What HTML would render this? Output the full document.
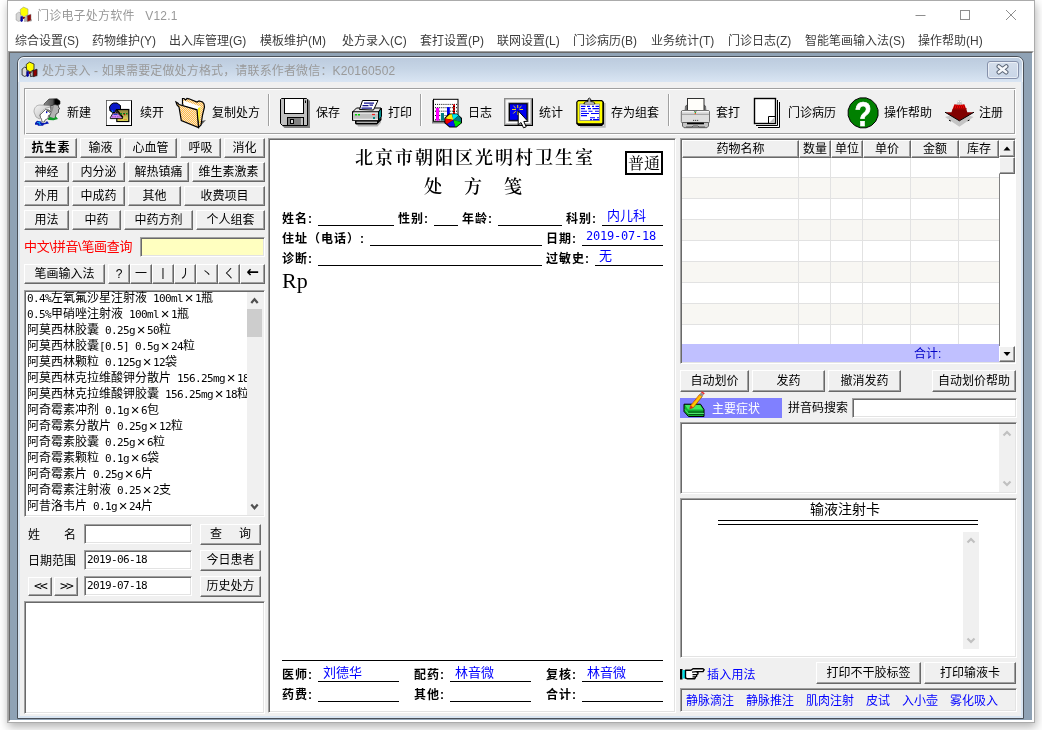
<!DOCTYPE html>
<html lang="zh-CN">
<head>
<meta charset="utf-8">
<title>门诊电子处方软件 V12.1</title>
<style>
*{box-sizing:border-box;margin:0;padding:0}
html,body{width:1042px;height:730px;overflow:hidden;background:#fff}
body{position:relative;will-change:transform;font-family:"Liberation Sans","Noto Sans CJK SC",sans-serif;font-size:12px;color:#000}
.a{position:absolute}
.ui{font-family:"Liberation Sans","Noto Sans CJK SC",sans-serif;font-size:12px;line-height:16px;white-space:nowrap}
.song{font-family:"Liberation Serif","Noto Serif CJK SC",serif}
.m{font-family:"DejaVu Sans Mono","Liberation Mono",monospace;font-size:11px;letter-spacing:-.62px}
.m13{font-family:"DejaVu Sans Mono","Liberation Mono",monospace;font-size:12px;letter-spacing:-.22px}
.x{display:inline-block;width:12px;height:16px;line-height:16px;font-size:15px;font-weight:300;vertical-align:top;text-align:center}
/* window */
#shadow{left:7px;top:0;width:1028px;height:723px;box-shadow:1px 4px 9px rgba(0,0,0,.3);background:#fff}
#win{left:7px;top:0;width:1028px;height:723px;background:#fff;border:1px solid #ababab}
#title{left:37px;top:8px;color:#999;font-size:12px;line-height:16px;white-space:pre;letter-spacing:.2px}
.menu{top:33px;color:#3c3c3c;font-size:12px;line-height:16px;white-space:nowrap}
/* mdi */
#druglist div{height:16px;overflow:hidden}
#mdi{left:8px;top:51px;width:1026px;height:671px;background:#8fa2b5;border:1px solid;border-color:#a0a0a0 #fff #fff #a0a0a0;overflow:hidden}
#mdi2{left:0;top:0;right:0;bottom:0;border:1px solid;border-color:#696969 #fff #fff #696969}
/* child window */
#child{left:17px;top:56px;width:1007px;height:663px;border:1px solid #4a5058;border-radius:7px 7px 0 0;background:#d9e5f2;overflow:hidden}
#ctitle{left:0;top:0;width:1005px;height:25px;background:linear-gradient(#bccbde 0,#c6d5e6 45%,#d9e5f3 100%);border-top:1px solid #f4f8fc;border-left:1px solid #f4f8fc;border-right:1px solid #f4f8fc;border-radius:6px 6px 0 0}
#cclient{left:2px;top:25px;width:1001px;height:634px;background:#f0f0f0}
#ctext{left:42px;top:63px;color:#9a9a9a;font-size:12px;line-height:16px;white-space:nowrap;letter-spacing:.15px}
#cclose{left:987px;top:61px;width:32px;height:18px;border:1px solid #8691ab;border-radius:3px;background:linear-gradient(#d4deeb,#c9d6e7);box-shadow:inset 0 0 0 1px rgba(255,255,255,.55)}
/* classic controls */
.btn{position:absolute;background:#f0f0f0;border:1px solid;border-color:#fff #696969 #696969 #fff;box-shadow:inset -1px -1px 0 #a0a0a0,inset 1px 1px 0 #f0f0f0;text-align:center;font-size:12px;line-height:19px;white-space:nowrap;overflow:hidden}
.sunk{position:absolute;background:#fff;border:1px solid;border-color:#a0a0a0 #fff #fff #a0a0a0;box-shadow:inset 1px 1px 0 #696969,inset -1px -1px 0 #e3e3e3}
.tb{top:105px;font-size:12px;line-height:16px;white-space:nowrap}
.sep{top:94px;width:2px;height:32px;border-left:1px solid #a0a0a0;border-right:1px solid #fff}
.lb{font-family:"Liberation Sans","Noto Sans CJK SC",sans-serif;font-weight:bold;font-size:12px;letter-spacing:1px;line-height:16px;white-space:nowrap}
.ul{height:1px;background:#000}
.bl{font-family:"Liberation Sans","Noto Sans CJK SC",sans-serif;font-size:13px;line-height:16px;color:#0000ff;white-space:nowrap}
.vl{top:17px;width:1px;height:187px;background:#e2e2e2}
.hd{top:0;height:18px;background:#f0f0f0;border:1px solid;border-color:#fff #696969 #696969 #fff;box-shadow:inset -1px -1px 0 #a0a0a0;text-align:center;font-size:12px;line-height:17px;white-space:nowrap;overflow:hidden}
.sbb{width:16px;background:#f0f0f0;border:1px solid;border-color:#fff #696969 #696969 #fff;box-shadow:inset -1px -1px 0 #a0a0a0}
</style>
</head>
<body>
<div class="a" id="shadow"></div>
<div class="a" id="win"></div>

<!-- main title bar -->
<svg class="a" style="left:15px;top:6px" width="18" height="18" viewBox="0 0 18 18">
  <path d="M1.100 8 L3.500 6.200 L6 7 L6 14.500 L3.500 15.400 L1.100 14Z" fill="#d6d6d6" stroke="#8a8a8a" stroke-width=".5"/>
  <path d="M9.200 12.500 L12.300 9 L12.500 15 L9.500 15.600Z" fill="#b4b4b4" stroke="#8a8a8a" stroke-width=".5"/>
  <path d="M12.100 9.500 L16 8.200 L16 14.500 L12.300 15.700Z" fill="#900000" stroke="#8a8a8a" stroke-width=".5"/>
  <path d="M5.600 10.500 L7.900 10.100 L7.900 15 L6.500 16 L5.400 15Z" fill="#0000a0"/>
  <path d="M7.900 11.100 L10.200 11.100 L9 13 L7.900 12.800Z" fill="#800000"/>
  <path d="M8.500 1.100 L5.200 3.500 L5.500 8.500 L9 11 L13 8.500 L13 3Z" fill="#ffff00" stroke="#8a8a8a" stroke-width=".5"/>
  <path d="M16.200 13 L17 13.500 L17 15 L13 16.300 L16.200 14.800Z" fill="#a0a0a0"/>
</svg>
<div class="a" id="title">门诊电子处方软件   V12.1</div>
<svg class="a" style="left:910px;top:5px" width="115" height="22" viewBox="0 0 115 22">
  <path d="M5.5 10.5H15.5" stroke="#8e8e8e" stroke-width="1" fill="none"/>
  <rect x="50.5" y="5.5" width="9" height="9" stroke="#8e8e8e" stroke-width="1" fill="none"/>
  <path d="M96 5L106 15M106 5L96 15" stroke="#8e8e8e" stroke-width="1" fill="none"/>
</svg>

<!-- menu bar -->
<div class="a menu" style="left:15px">综合设置(S)</div>
<div class="a menu" style="left:92px">药物维护(Y)</div>
<div class="a menu" style="left:169px">出入库管理(G)</div>
<div class="a menu" style="left:260px">模板维护(M)</div>
<div class="a menu" style="left:342px">处方录入(C)</div>
<div class="a menu" style="left:420px">套打设置(P)</div>
<div class="a menu" style="left:497px">联网设置(L)</div>
<div class="a menu" style="left:573px">门诊病历(B)</div>
<div class="a menu" style="left:651px">业务统计(T)</div>
<div class="a menu" style="left:728px">门诊日志(Z)</div>
<div class="a menu" style="left:805px">智能笔画输入法(S)</div>
<div class="a menu" style="left:918px">操作帮助(H)</div>

<!-- MDI client -->
<div class="a" id="mdi"><div class="a" id="mdi2"></div></div>

<!-- child window -->
<div class="a" id="child">
  <div class="a" id="ctitle"></div>
  <div class="a" id="cclient"></div>
</div>
<svg class="a" style="left:21px;top:61px" width="18" height="18" viewBox="0 0 18 18">
  <path d="M1.100 8 L3.500 6.200 L6 7 L6 14.500 L3.500 15.400 L1.100 14Z" fill="#d6d6d6" stroke="#1a1a1a" stroke-width=".8"/>
  <path d="M9.200 12.500 L12.300 9 L12.500 15 L9.500 15.600Z" fill="#b4b4b4" stroke="#1a1a1a" stroke-width=".8"/>
  <path d="M12.100 9.500 L16 8.200 L16 14.500 L12.300 15.700Z" fill="#900000" stroke="#1a1a1a" stroke-width=".8"/>
  <path d="M5.600 10.500 L7.900 10.100 L7.900 15 L6.500 16 L5.400 15Z" fill="#0000a0"/>
  <path d="M7.900 11.100 L10.200 11.100 L9 13 L7.900 12.800Z" fill="#800000"/>
  <path d="M8.500 1.100 L5.200 3.500 L5.500 8.500 L9 11 L13 8.500 L13 3Z" fill="#ffff00" stroke="#1a1a1a" stroke-width=".8"/>
  <path d="M16.200 13 L17 13.500 L17 15 L13 16.300 L16.200 14.800Z" fill="#a0a0a0"/>
</svg>
<div class="a" id="ctext">处方录入 - 如果需要定做处方格式，请联系作者微信：K20160502</div>
<div class="a" id="cclose"></div>
<svg class="a" style="left:996px;top:64px" width="13" height="11" viewBox="0 0 13 11">
  <path d="M2.800 2.500L10.200 8.200M10.200 2.500L2.800 8.200" stroke="#5c6676" stroke-width="4.600" stroke-linecap="round" fill="none"/>
  <path d="M2.800 2.500L10.200 8.200M10.200 2.500L2.800 8.200" stroke="#f6f8fb" stroke-width="2.600" stroke-linecap="round" fill="none"/>
</svg>

<!-- toolbar frame -->
<div class="a" style="left:24px;top:88px;width:992px;height:47px;border:1px solid;border-color:#a0a0a0 #fff #fff #a0a0a0;box-shadow:inset 1px 1px 0 #fff,inset -1px -1px 0 #a0a0a0"></div>
<div class="a sep" style="left:268px"></div>
<div class="a sep" style="left:420px"></div>
<div class="a sep" style="left:668px"></div>

<!-- 新建 -->
<svg class="a" style="left:30px;top:95px" width="36" height="36" viewBox="0 0 36 36">
  <defs>
    <linearGradient id="g1" x1="0" x2="1"><stop offset="0" stop-color="#8a8a8a"/><stop offset=".55" stop-color="#555"/><stop offset=".7" stop-color="#000"/></linearGradient>
    <linearGradient id="g2" x1="0" x2="1" y1="0" y2="1"><stop offset="0" stop-color="#f4f4f4"/><stop offset=".6" stop-color="#d0d0d0"/><stop offset="1" stop-color="#9a9a9a"/></linearGradient>
  </defs>
  <path d="M14 9 L19 4 L27 3.700 L30 6 L30 9 L27 10.500 L22 11 L20 10.500 L14 10.500Z" fill="url(#g1)" stroke="#222" stroke-width=".6"/>
  <path d="M20.500 11 L25 9.500 L28.500 10.500 L28.500 12.500 L30 13.500 L28.500 14.500 L28.500 17.500 L26 19 L25 24 L19 24.500 L20 19 L21 16Z" fill="#b4b4b4" stroke="#222" stroke-width=".7"/>
  <path d="M21 12 L24 11 L22.500 16 L20.500 18.500Z" fill="#8c8c8c"/>
  <path d="M17.700 23.500 L20 22 L24.500 23.300 L25.500 21 L28 24 L23.500 25.200 L18.500 25Z" fill="#109a28"/>
  <path d="M4 17 C4 12 7 10 10 10 L19.500 10.500 L20.500 12 L15 13.500 L11 17.500 L9.500 20 L11 22.500 L9.500 24 L6 22Z" fill="url(#g2)" stroke="#777" stroke-width=".5"/>
  <path d="M10 20 L15.500 14.500 L19 15 L21 17 L20.500 19.500 L18.500 20.500 L18 23.500 L15 25 L14.500 27 L12 27 L11.500 24 L10.500 22.500Z" fill="#fff" stroke="#333" stroke-width=".7"/>
  <path d="M16 16.500 L18 15.700 L20 17.500" fill="none" stroke="#000" stroke-width=".9"/>
  <rect x="16" y="16.800" width="1.300" height="1.300" fill="#0000f0"/>
  <path d="M5 28 L7 25.800 L11 26.500 L12 28 L15 28 L17 26 L19 28.500 L14 29.500 L13 30.800 L8 30.800 L7.500 29.800 L5 29.800Z" fill="#0a1ab0"/>
  <path d="M7 27.500 L10 27.200 L9 29 L11 29.500" fill="none" stroke="#10a0f0" stroke-width="1"/>
</svg>
<div class="a tb" style="left:67px">新建</div>

<!-- 续开 -->
<svg class="a" style="left:102px;top:95px" width="36" height="36" viewBox="0 0 36 36">
  <defs><linearGradient id="g3" x1="0" x2="0" y1="0" y2="1"><stop offset="0" stop-color="#8c8438"/><stop offset=".5" stop-color="#b8ac50"/><stop offset="1" stop-color="#f4f060"/></linearGradient></defs>
  <rect x="4.500" y="5.500" width="25" height="25" fill="#fff" stroke="#000" stroke-width="1"/>
  <path d="M4.500 30 V5.500 H29.500" fill="none" stroke="#707070" stroke-width="1"/>
  <rect x="14.800" y="14.500" width="12" height="12" fill="url(#g3)" stroke="#000" stroke-width="1.200"/>
  <path d="M8 16 L7.500 12 L9 9.500 L11.500 8 L15 8 L17 9.500 L18.500 10.500 L18.500 14.500 L14 14.500 L13 17.500 L10 17.500 L9 16Z" fill="#0a18c8" stroke="#000" stroke-width="1"/>
  <path d="M9.500 15.500 L11 18 L11 15.500Z" fill="#1090f0"/>
  <path d="M11 18 L15.500 18 L20.500 22.700 L20.500 23.600 L8.300 23.600 L8.300 22.700Z" fill="#d090f0" stroke="#000" stroke-width=".9"/>
  <path d="M11.500 19.500h4" stroke="#2840d0" stroke-width="1"/>
  <path d="M10 21.800h8.500" stroke="#a040c0" stroke-width="1" stroke-dasharray="1.500 1"/>
  <path d="M14.500 14.500 L21 22.500" stroke="#000" stroke-width="1.200"/>
  <path d="M18 18.700h2M21 18.700h2M24 18.700h1.500" stroke="#0a7a20" stroke-width="1.600"/>
  <rect x="22" y="19" width="1.200" height="1.200" fill="#e00000"/>
  <path d="M16.500 24.300h3M21.500 24.300h3.500" stroke="#e09030" stroke-width="1"/>
</svg>
<div class="a tb" style="left:140px">续开</div>

<!-- 复制处方 -->
<svg class="a" style="left:173px;top:95px" width="36" height="36" viewBox="0 0 36 36">
  <defs><pattern id="ht" width="2" height="2" patternUnits="userSpaceOnUse"><rect width="2" height="2" fill="#ffc040"/><rect width="1" height="1" fill="#f8e0d0"/><rect x="1" y="1" width="1" height="1" fill="#f8e0d0"/></pattern></defs>
  <path d="M26 32.500 L33 25 L29 26 L27 30Z" fill="#555"/>
  <path d="M9.500 9 L9.500 3.500 L11 3.500 L12.500 5 L14 3.500 L16 3.800 L24 7 L26 6 L29.500 7 L31 9 L31.500 12 L29.500 20 L28 30 L25.500 32.500 L24 15Z" fill="url(#ht)" stroke="#000" stroke-width="1.200" stroke-linejoin="miter"/>
  <path d="M10.500 5.500 L27.500 11.500 L26.500 27 L24 15 L10.500 10.500Z" fill="#fff"/>
  <path d="M25 13 L27.500 12 L26.500 28 L25.200 24Z" fill="#f8f020"/>
  <path d="M3 7 L5 8.200 L6 9.500 L24 14.800 L25.500 32.500 L8.300 25.500 L6 12 L4 10Z" fill="url(#ht)" stroke="#000" stroke-width="1.200" stroke-linejoin="miter"/>
</svg>
<div class="a tb" style="left:212px">复制处方</div>

<!-- 保存 -->
<svg class="a" style="left:276px;top:94px" width="36" height="36" viewBox="0 0 36 36">
  <path d="M6.500 32 L8.500 34 L34 34 L34 7 L32 5 L32 32Z" fill="#808080"/>
  <path d="M5.500 4.500 L30.500 4.500 L31.500 5.500 L31.500 31.500 L6.500 31.500 L4.500 29.500 L4.500 5.500Z" fill="#c0c0c0" stroke="#000" stroke-width="1"/>
  <rect x="8.500" y="4.500" width="19" height="15" fill="#fff" stroke="#000" stroke-width="1"/>
  <rect x="11.500" y="23.500" width="16" height="8" fill="#808080" stroke="#000" stroke-width="1"/>
  <rect x="25" y="24" width="2" height="7" fill="#c0c0c0"/>
  <rect x="14.500" y="25.500" width="3" height="4" fill="#d8d8d8" stroke="#000" stroke-width="1"/>
  <rect x="29" y="6.500" width="1" height="2.500" fill="#000"/>
</svg>
<div class="a tb" style="left:316px">保存</div>

<!-- 打印 -->
<svg class="a" style="left:348px;top:94px" width="36" height="36" viewBox="0 0 36 36">
  <path d="M9 30.500 L29 30.500 L33 26.500 L33 28.500 L29.500 32.500 L10 32.500Z" fill="#b0b0b0"/>
  <path d="M7 26.500 L30.500 26.500 L33.500 23 L33.500 26 L29 30.500 L8 30.500 L7 29.500Z" fill="#000"/>
  <path d="M8.500 28.200 L29 28.200" stroke="#fff" stroke-width="1"/>
  <path d="M4.500 18 L8.500 14 L33 14 L30.500 18Z" fill="#e4e4e4" stroke="#000" stroke-width="1"/>
  <path d="M30.500 18 L33.500 14.200 L33.500 22.500 L30.500 26.300Z" fill="#008888" stroke="#000" stroke-width="1"/>
  <rect x="4.500" y="18" width="26" height="8.300" fill="#c0c0c0" stroke="#000" stroke-width="1"/>
  <path d="M5.500 19 H30" stroke="#fff" stroke-width="1"/>
  <path d="M5.500 25.300 H30" stroke="#fff" stroke-width="1"/>
  <path d="M11.500 15.500 L14.500 6.500 L30 6.500 L25.500 16Z" fill="#fff" stroke="#000" stroke-width="1"/>
  <path d="M16 9.200h10M14.500 11.700h6M21.500 11.200h3.500M13.500 14.200h10.500" stroke="#10108c" stroke-width="1.200"/>
  <path d="M7 20.700h2M10 20.700h2" stroke="#00d000" stroke-width="1.600"/>
  <path d="M24 20.500h3" stroke="#f02020" stroke-width="1.200"/>
  <rect x="25" y="23" width="2" height="2" fill="#008888"/>
</svg>
<div class="a tb" style="left:388px">打印</div>

<!-- 日志 -->
<svg class="a" style="left:426px;top:94px" width="38" height="36" viewBox="0 0 38 36">
  <path d="M6 6 L6 29.500 L20 29.500 L20 27.500 L7 27.500 L7 6Z" fill="#808080"/>
  <rect x="7.500" y="5.300" width="24.500" height="22" fill="#fff" stroke="#000" stroke-width="1"/>
  <path d="M9 10.400h22M9 13.700h22M9 17.200h22M9 21.500h22M9 25.800h22" stroke="#000" stroke-width="1" stroke-dasharray="1 1.100"/>
  <rect x="10" y="13.800" width="3.100" height="12.800" fill="#ff00ff"/>
  <rect x="14.900" y="19" width="3.100" height="7.600" fill="#008080"/>
  <rect x="21" y="13.100" width="2.800" height="9" fill="#0000f0"/>
  <rect x="27" y="10.400" width="2" height="9.500" fill="#f00000"/>
  <path d="M27 12.500h2M27 15h2M27 17.500h2" stroke="#000" stroke-width=".8"/>
  <path d="M18.300 24 L23 19.600 L31 19.400 L36 24 L36 29 L30.500 33.500 L23.500 33.500 L18.300 29Z" fill="#000"/>
  <path d="M27.300 26 L19.300 24.500 L23.500 20.500 L26 20.300Z" fill="#ffee00"/>
  <path d="M27.300 26 L26 20.300 L31 20.300 L32.500 21.500Z" fill="#00e8f0"/>
  <path d="M27.300 26 L32.500 21.500 L35 24.500 L35 28Z" fill="#007c80"/>
  <path d="M27.300 26 L35 28 L34.500 29.300 L30.500 32.500 L29 32.500Z" fill="#00e000"/>
  <path d="M27.300 26 L29 32.500 L23.800 32.500 L21 30Z" fill="#1010f0"/>
  <path d="M27.300 26 L21 30 L19.300 28.500 L19.300 24.500Z" fill="#f00000"/>
</svg>
<div class="a tb" style="left:468px">日志</div>

<!-- 统计 -->
<svg class="a" style="left:498px;top:94px" width="38" height="36" viewBox="0 0 38 36">
  <rect x="6" y="4" width="29" height="28" fill="#8c8c8c"/>
  <path d="M6 32 H35 V4 L34 5 V31 H7Z" fill="#000"/>
  <rect x="7.500" y="5.500" width="25.500" height="24.500" fill="#fff"/>
  <path d="M7.500 5.500 H33 L30.500 8 H10 V27.500 L7.500 30Z" fill="#c8c8c8"/>
  <path d="M33 5.500 V30 H7.500 L10 27.500 H30.500 V8Z" fill="#b0b0b0"/>
  <rect x="9" y="7" width="22.500" height="21.500" fill="none" stroke="#fff" stroke-width="1.600"/>
  <rect x="10.300" y="8.500" width="20" height="19" fill="#606060"/>
  <rect x="11.500" y="9.800" width="17.500" height="16.500" fill="#0000f0" stroke="#000" stroke-width="1"/>
  <path d="M19.700 11v3M19.700 17.500v3.500M14 15.500h4M21.500 15.500h3.500M15.500 12l2.300 2.200M23.500 12l-2.200 2.200M15.300 19.500l2.400-2.400" stroke="#ffee00" stroke-width=".9"/>
  <path d="M20.200 16.800 L20.200 31 L23 28.500 L25.500 33.800 L28.200 32.800 L25.800 27.500 L29.800 27.300Z" fill="#fff" stroke="#000" stroke-width="1"/>
</svg>
<div class="a tb" style="left:539px">统计</div>

<!-- 存为组套 -->
<svg class="a" style="left:570px;top:94px" width="38" height="36" viewBox="0 0 38 36">
  <path d="M10 32 L10 33.700 L35.700 33.700 L35.700 9 L34 9 L34 32Z" fill="#b8b8b8"/>
  <path d="M8 6 H32 L34 8 V30 L32 32 H8.500 L6.200 29.800 V8Z" fill="#000"/>
  <path d="M8.500 7.200 H31.500 L32.300 8 V28.500 L31.500 29.300 H8.500 L7.500 28.500 V8Z" fill="#ffff00"/>
  <rect x="9.800" y="10" width="19.600" height="16.600" fill="#fff" stroke="#808080" stroke-width=".8"/>
  <path d="M11 12.400h4.500M17 12.400h3M22 12.400h2M25.500 12.400h3.500M11 14.600h4M18 14.600h3M22.500 14.600h6.500M11 17.300h6M18.500 17.300h4M25 17.300h4M11 19.500h8M21 19.500h8M11 21.600h6M20 23.700h5M27 23.700h2M20 25.600h2M23 25.600h6" stroke="#0000ff" stroke-width="1.100"/>
  <path d="M13.800 9.800 L15 8 L18 7.500 L18 5 L19.300 4 L20.700 5 L20.700 7.500 L23.800 8 L25 9.800Z" fill="#b0b0b0" stroke="#000" stroke-width=".8"/>
  <path d="M15 9.300h9" stroke="#e8e8e8" stroke-width=".8"/>
</svg>
<div class="a tb" style="left:611px">存为组套</div>

<!-- 套打 -->
<svg class="a" style="left:676px;top:94px" width="38" height="36" viewBox="0 0 38 36">
  <path d="M9 16.500 L9.500 12 L11 11 L11 16.500Z M28 16.500 L28 11 L29.500 12 L30 16.500Z" fill="#8a8a8a" stroke="#444" stroke-width=".6"/>
  <rect x="11.500" y="4.500" width="16.500" height="12.500" fill="#fffefa" stroke="#303030" stroke-width="1"/>
  <rect x="5.300" y="16.500" width="28.200" height="12.500" rx="1.500" fill="#dedede" stroke="#707070" stroke-width="1"/>
  <path d="M6 17.500h27" stroke="#f4f4f4" stroke-width="1"/>
  <path d="M6 20.300h27" stroke="#9a9a9a" stroke-width="1"/>
  <path d="M6.500 28.500 H32.500 L32.500 32 L31 33.700 H8 L6.500 32Z" fill="#c4c4c4" stroke="#606060" stroke-width="1"/>
  <path d="M11 29.500h17" stroke="#000" stroke-width="1.600"/>
  <path d="M10 33h6l1-1h5l1 1h6" stroke="#555" stroke-width="1" fill="none"/>
  <path d="M17 26.400h1.200M19 26.400h1.200M21 26.400h1.200" stroke="#444" stroke-width="1"/>
  <path d="M17.500 16.500 L19.300 18 L21 16.500" stroke="#555" stroke-width=".8" fill="none"/>
  <rect x="18.700" y="17.700" width="1.200" height="1.200" fill="#00b020"/>
  <rect x="18.700" y="19" width="1.200" height="1.200" fill="#ff5010"/>
</svg>
<div class="a tb" style="left:716px">套打</div>

<!-- 门诊病历 -->
<svg class="a" style="left:753px;top:97px" width="29" height="33" viewBox="0 0 29 33">
  <path d="M5 30.500 L26.500 30.500 L26.500 5" fill="none" stroke="#000" stroke-width="1"/>
  <path d="M3 28.500 L24.500 28.500 L24.500 3" fill="none" stroke="#000" stroke-width="1"/>
  <path d="M4 29.500 L25.500 29.500 L25.500 4M2 27.500H23.500V2" fill="none" stroke="#fff" stroke-width="1"/>
  <rect x="1.500" y="1.500" width="21" height="25" fill="#fff" stroke="#000" stroke-width="1.400"/>
  <path d="M15.500 26.500 V19.500 H22.500" fill="none" stroke="#000" stroke-width="1"/>
  <path d="M16.500 25.500 L21.500 20.500 L21.500 25.500Z" fill="#c0c0c0"/>
</svg>
<div class="a tb" style="left:788px">门诊病历</div>

<!-- 操作帮助 -->
<svg class="a" style="left:842px;top:94px" width="40" height="36" viewBox="0 0 40 36">
  <path d="M36.0 21.8 L33.7 27.3 L29.5 31.5 L24.1 33.8 L18.1 33.8 L12.7 31.5 L8.5 27.3 L6.2 21.8 L6.2 15.9 L8.5 10.4 L12.7 6.2 L18.1 3.9 L24.1 3.9 L29.5 6.2 L33.7 10.4 L36.0 15.9Z" fill="#008000" stroke="#000" stroke-width="1"/>
  <text transform="translate(21.100 31.900) scale(.78 1)" text-anchor="middle" font-family="Liberation Sans,sans-serif" font-weight="bold" font-size="36" fill="#fff" stroke="#fff" stroke-width=".7">?</text>
</svg>
<div class="a tb" style="left:884px">操作帮助</div>

<!-- 注册 -->
<svg class="a" style="left:938px;top:94px" width="40" height="36" viewBox="0 0 40 36">
  <path d="M7 23 L14 21 L21.400 27 L29 21 L35.500 23 L21.400 32.800Z" fill="#c4c4c4"/>
  <path d="M11 26.200l1.800 .8M31.500 26l-1.800 .8" stroke="#000" stroke-width="1"/>
  <path d="M7 18.200 L13.500 18.200 L14.500 15 L28.300 15 L29.300 18.200 L36 18.200 L21.400 26.800Z" fill="#800000"/>
  <path d="M7 18.200 L21.400 26.800 L36 18.200" fill="none" stroke="#000" stroke-width="1"/>
  <path d="M14.500 15.200 L16.300 10.500 L26.500 10.500 L28.300 15.200Z" fill="#f00000"/>
  <path d="M16 13h12M15.500 14.600h13" stroke="#600000" stroke-width="1" stroke-dasharray="1 1"/>
  <path d="M16.500 11h10" stroke="#600000" stroke-width=".8" stroke-dasharray="1 1.200"/>
  <path d="M18.500 10.500 L20 6.500 L23 6.500 L24.500 10.500Z" fill="#c8c8c8"/>
  <path d="M20 7.500h1M22 7.500h1" stroke="#fff" stroke-width="1.200"/>
</svg>
<div class="a tb" style="left:979px">注册</div>

<!-- category buttons -->
<div class="btn" style="left:24px;top:138px;width:53px;height:20px;font-weight:bold;letter-spacing:1px;text-indent:1px">抗生素</div>
<div class="btn" style="left:80px;top:138px;width:41px;height:20px">输液</div>
<div class="btn" style="left:124px;top:138px;width:53px;height:20px">心血管</div>
<div class="btn" style="left:180px;top:138px;width:41px;height:20px">呼吸</div>
<div class="btn" style="left:224px;top:138px;width:41px;height:20px">消化</div>

<div class="btn" style="left:24px;top:162px;width:45px;height:20px">神经</div>
<div class="btn" style="left:72px;top:162px;width:53px;height:20px">内分泌</div>
<div class="btn" style="left:128px;top:162px;width:61px;height:20px">解热镇痛</div>
<div class="btn" style="left:192px;top:162px;width:73px;height:20px">维生素激素</div>

<div class="btn" style="left:24px;top:186px;width:45px;height:20px">外用</div>
<div class="btn" style="left:72px;top:186px;width:53px;height:20px">中成药</div>
<div class="btn" style="left:128px;top:186px;width:53px;height:20px">其他</div>
<div class="btn" style="left:184px;top:186px;width:81px;height:20px">收费项目</div>

<div class="btn" style="left:24px;top:210px;width:45px;height:20px">用法</div>
<div class="btn" style="left:72px;top:210px;width:49px;height:20px">中药</div>
<div class="btn" style="left:124px;top:210px;width:69px;height:20px">中药方剂</div>
<div class="btn" style="left:196px;top:210px;width:69px;height:20px">个人组套</div>

<!-- search -->
<div class="a ui" id="redlab" style="left:24px;top:239px;color:#ff0000;font-size:13px;letter-spacing:-.3px">中文\拼音\笔画查询</div>
<div class="sunk" style="left:140px;top:237px;width:125px;height:20px;background:#ffffc0"></div>

<div class="btn" style="left:24px;top:264px;width:81px;height:20px">笔画输入法</div>
<div class="btn" style="left:108px;top:264px;width:22px;height:20px">?</div>
<div class="btn" style="left:130px;top:264px;width:22px;height:20px">一</div>
<div class="btn" style="left:152px;top:264px;width:22px;height:20px">丨</div>
<div class="btn" style="left:174px;top:264px;width:22px;height:20px">丿</div>
<div class="btn" style="left:196px;top:264px;width:22px;height:20px">丶</div>
<div class="btn" style="left:218px;top:264px;width:22px;height:20px">ㄑ</div>
<div class="btn" style="left:240px;top:264px;width:25px;height:20px;font-weight:bold;font-size:15px;line-height:15px;font-family:'DejaVu Sans','Liberation Sans',sans-serif">←</div>

<!-- drug list -->
<div class="sunk" style="left:24px;top:290px;width:241px;height:227px"></div>
<div class="a" id="druglist" style="left:27px;top:290px;width:220px;height:225px;overflow:hidden;font-size:12px;line-height:16px;white-space:nowrap">
<div><span class="m">0.4%</span>左氧氟沙星注射液<span class="m"> 100ml</span><span class="x">×</span><span class="m">1</span>瓶</div>
<div><span class="m">0.5%</span>甲硝唑注射液<span class="m"> 100ml</span><span class="x">×</span><span class="m">1</span>瓶</div>
<div>阿莫西林胶囊<span class="m"> 0.25g</span><span class="x">×</span><span class="m">50</span>粒</div>
<div>阿莫西林胶囊<span class="m">[0.5]</span><span class="m"> 0.5g</span><span class="x">×</span><span class="m">24</span>粒</div>
<div>阿莫西林颗粒<span class="m"> 0.125g</span><span class="x">×</span><span class="m">12</span>袋</div>
<div>阿莫西林克拉维酸钾分散片<span class="m"> 156.25mg</span><span class="x">×</span><span class="m">18</span>片</div>
<div>阿莫西林克拉维酸钾胶囊<span class="m"> 156.25mg</span><span class="x">×</span><span class="m">18</span>粒</div>
<div>阿奇霉素冲剂<span class="m"> 0.1g</span><span class="x">×</span><span class="m">6</span>包</div>
<div>阿奇霉素分散片<span class="m"> 0.25g</span><span class="x">×</span><span class="m">12</span>粒</div>
<div>阿奇霉素胶囊<span class="m"> 0.25g</span><span class="x">×</span><span class="m">6</span>粒</div>
<div>阿奇霉素颗粒<span class="m"> 0.1g</span><span class="x">×</span><span class="m">6</span>袋</div>
<div>阿奇霉素片<span class="m"> 0.25g</span><span class="x">×</span><span class="m">6</span>片</div>
<div>阿奇霉素注射液<span class="m"> 0.25</span><span class="x">×</span><span class="m">2</span>支</div>
<div>阿昔洛韦片<span class="m"> 0.1g</span><span class="x">×</span><span class="m">24</span>片</div>
</div>
<!-- list scrollbar -->
<div class="a" style="left:247px;top:292px;width:17px;height:223px;background:#f0f0f0"></div>
<div class="a" style="left:247px;top:309px;width:15px;height:28px;background:#cdcdcd"></div>
<svg class="a" style="left:246px;top:292px" width="17" height="17" viewBox="0 0 17 17"><path d="M5.300 11L8.500 7.300L11.700 11" stroke="#505050" stroke-width="2.200" fill="none"/></svg>
<svg class="a" style="left:246px;top:498px" width="17" height="17" viewBox="0 0 17 17"><path d="M5.300 6.500L8.500 10.200L11.700 6.500" stroke="#505050" stroke-width="2.200" fill="none"/></svg>

<!-- patient search -->
<div class="a ui" style="left:28px;top:527px">姓<span style="display:inline-block;width:24px"></span>名</div>
<div class="sunk" style="left:84px;top:524px;width:108px;height:20px"></div>
<div class="btn" style="left:200px;top:524px;width:61px;height:21px;line-height:19px">查<span style="display:inline-block;width:17px"></span>询</div>
<div class="a ui" style="left:28px;top:553px">日期范围</div>
<div class="sunk" style="left:84px;top:550px;width:108px;height:20px"></div>
<div class="a ui" style="left:87px;top:551px"><span class="m">2019-06-18</span></div>
<div class="btn" style="left:200px;top:550px;width:61px;height:21px;line-height:19px">今日患者</div>
<div class="btn" style="left:28px;top:577px;width:24px;height:19px;line-height:16px"><span class="m" style="font-size:13px;letter-spacing:-1.8px">&lt;&lt;</span></div>
<div class="btn" style="left:54px;top:577px;width:24px;height:19px;line-height:16px"><span class="m" style="font-size:13px;letter-spacing:-1.8px">&gt;&gt;</span></div>
<div class="sunk" style="left:84px;top:576px;width:108px;height:20px"></div>
<div class="a ui" style="left:87px;top:577px"><span class="m">2019-07-18</span></div>
<div class="btn" style="left:200px;top:576px;width:61px;height:21px;line-height:19px">历史处方</div>
<div class="sunk" style="left:24px;top:601px;width:241px;height:113px"></div>

<!-- prescription sheet -->
<div class="a" style="left:268px;top:138px;width:408px;height:575px;background:#fff;border:1px solid;border-color:#a0a0a0 #fff #fff #a0a0a0;box-shadow:inset 1px 1px 0 #696969,inset -1px -1px 0 #e3e3e3"></div>
<div class="a song" id="hosp" style="left:355px;top:145px;font-weight:600;font-size:18px;line-height:26px;letter-spacing:2px;white-space:nowrap">北京市朝阳区光明村卫生室</div>
<div class="a song" id="cfj" style="left:424px;top:174px;font-weight:600;font-size:18px;line-height:26px;letter-spacing:22px;white-space:nowrap">处方笺</div>
<div class="a song" style="left:625px;top:151px;width:38px;height:24px;border:2px solid #000;font-size:16px;line-height:22px;text-align:center;white-space:nowrap">普通</div>

<div class="a lb" style="left:282px;top:211px">姓名:</div>
<div class="a ul" style="left:318px;top:225px;width:76px"></div>
<div class="a lb" style="left:398px;top:211px">性别:</div>
<div class="a ul" style="left:434px;top:225px;width:24px"></div>
<div class="a lb" style="left:462px;top:211px">年龄:</div>
<div class="a ul" style="left:498px;top:225px;width:64px"></div>
<div class="a lb" style="left:566px;top:211px">科别:</div>
<div class="a ul" style="left:602px;top:225px;width:61px"></div>
<div class="a bl" style="left:607px;top:208px">内儿科</div>

<div class="a lb" style="left:282px;top:231px">住址（电话）:</div>
<div class="a ul" style="left:370px;top:245px;width:172px"></div>
<div class="a lb" style="left:546px;top:231px">日期:</div>
<div class="a ul" style="left:582px;top:245px;width:81px"></div>
<div class="a bl" style="left:586px;top:228px"><span class="m13">2019-07-18</span></div>

<div class="a lb" style="left:282px;top:251px">诊断:</div>
<div class="a ul" style="left:318px;top:265px;width:224px"></div>
<div class="a lb" style="left:546px;top:251px">过敏史:</div>
<div class="a ul" style="left:595px;top:265px;width:68px"></div>
<div class="a bl" style="left:599px;top:248px">无</div>

<div class="a" id="rp" style="left:282px;top:268px;font-family:'Liberation Serif',serif;font-size:22px;line-height:26px">Rp</div>

<div class="a ul" style="left:282px;top:660px;width:381px"></div>
<div class="a lb" style="left:282px;top:667px">医师:</div>
<div class="a ul" style="left:318px;top:681px;width:81px"></div>
<div class="a bl" style="left:323px;top:665px">刘德华</div>
<div class="a lb" style="left:414px;top:667px">配药:</div>
<div class="a ul" style="left:450px;top:681px;width:81px"></div>
<div class="a bl" style="left:455px;top:665px">林音微</div>
<div class="a lb" style="left:546px;top:667px">复核:</div>
<div class="a ul" style="left:582px;top:681px;width:81px"></div>
<div class="a bl" style="left:587px;top:665px">林音微</div>
<div class="a lb" style="left:282px;top:687px">药费:</div>
<div class="a ul" style="left:318px;top:701px;width:81px"></div>
<div class="a lb" style="left:414px;top:687px">其他:</div>
<div class="a ul" style="left:450px;top:701px;width:81px"></div>
<div class="a lb" style="left:546px;top:687px">合计:</div>
<div class="a ul" style="left:582px;top:701px;width:81px"></div>

<!-- drug grid -->
<div class="sunk" style="left:680px;top:138px;width:336px;height:226px"></div>
<div class="a" id="grid" style="left:682px;top:140px;width:317px;height:222px;overflow:hidden;background:#fff">
  <div class="a" style="left:0;top:16.500px;width:317px;height:189px;background:repeating-linear-gradient(#fff 0,#fff 20px,#e2e2e2 20px,#e2e2e2 21px,#f8f7f3 21px,#f8f7f3 41px,#e2e2e2 41px,#e2e2e2 42px)"></div>
  <div class="a vl" style="left:116px"></div><div class="a vl" style="left:148px"></div><div class="a vl" style="left:180px"></div><div class="a vl" style="left:228px"></div><div class="a vl" style="left:276px"></div>
  <div class="a hd" style="left:0;width:117px">药物名称</div>
  <div class="a hd" style="left:117px;width:32px">数量</div>
  <div class="a hd" style="left:149px;width:32px">单位</div>
  <div class="a hd" style="left:181px;width:48px">单价</div>
  <div class="a hd" style="left:229px;width:48px">金额</div>
  <div class="a hd" style="left:277px;width:40px">库存</div>
  <div class="a" style="left:0;top:204px;width:317px;height:18px;background:#c0c0ff"></div>
  <div class="a ui" style="left:232px;top:206px;color:#0000c8">合计:</div>
</div>
<!-- grid scrollbar -->
<div class="a" style="left:999px;top:140px;width:16px;height:222px;background:#fff;border-left:1px solid #808080"></div>
<div class="a sbb" style="left:999px;top:140px;height:17px"></div>
<div class="a sbb" style="left:999px;top:157px;height:17px"></div>
<div class="a sbb" style="left:999px;top:346px;height:16px"></div>
<svg class="a" style="left:999px;top:140px" width="16" height="17" viewBox="0 0 16 17"><path d="M4.500 10.500L8 6.500L11.500 10.500Z" fill="#000"/></svg>
<svg class="a" style="left:999px;top:346px" width="16" height="16" viewBox="0 0 16 16"><path d="M4.500 6L8 10L11.500 6Z" fill="#000"/></svg>

<div class="btn" style="left:680px;top:370px;width:69px;height:22px;line-height:20px">自动划价</div>
<div class="btn" style="left:752px;top:370px;width:73px;height:22px;line-height:20px">发药</div>
<div class="btn" style="left:828px;top:370px;width:73px;height:22px;line-height:20px">撤消发药</div>
<div class="btn" style="left:932px;top:370px;width:84px;height:22px;line-height:20px">自动划价帮助</div>

<!-- symptoms -->
<div class="a" style="left:680px;top:398px;width:102px;height:20px;background:#8080ff"></div>
<svg class="a" style="left:676px;top:390px" width="32" height="30" viewBox="0 0 32 30">
  <path d="M8 14.200 L24.500 14.200 L28 19.500 L28 26.500 L12.500 26.500 L8 21.500Z" fill="#10b030" stroke="#000" stroke-width="1"/>
  <path d="M9 15 L24 15 L27 19.500 L12 19.500Z" fill="#40e860"/>
  <path d="M12 22h16M12.500 24.500h15.500" stroke="#003810" stroke-width=".8"/>
  <path d="M9 19.500 L12.500 23.500 L28 23.500" stroke="#60f080" stroke-width=".8" fill="none"/>
  <path d="M13.800 18.800 L14.600 15.600 L23.500 4.500 L26.300 6.500 L17.400 17.600Z" fill="#ffc800" stroke="#a04000" stroke-width=".7"/>
  <path d="M15 16 L24 5" stroke="#ff9000" stroke-width="1"/>
  <path d="M13.800 18.800 L14.600 15.600 L17.400 17.600Z" fill="#e02020"/>
  <path d="M23.500 4.500 L25 2.600 L27.800 4.600 L26.300 6.500Z" fill="#909090"/>
  <path d="M25 2.600 L26 1.300 L28.800 3.300 L27.800 4.600Z" fill="#f03030"/>
</svg>
<div class="a ui" style="left:712px;top:401px;color:#fff">主要症状</div>
<div class="a ui" style="left:788px;top:400px">拼音码搜索</div>
<div class="sunk" style="left:852px;top:398px;width:165px;height:20px"></div>
<div class="sunk" style="left:680px;top:422px;width:337px;height:72px"></div>
<div class="a" style="left:999px;top:424px;width:16px;height:68px;background:#f0f0f0"></div>
<svg class="a" style="left:999px;top:425px" width="16" height="17" viewBox="0 0 16 17"><path d="M4.500 10.500L8 7L11.500 10.500" stroke="#c0c0c0" stroke-width="2.200" fill="none"/></svg>
<svg class="a" style="left:999px;top:475px" width="16" height="17" viewBox="0 0 16 17"><path d="M4.500 6.500L8 10L11.500 6.500" stroke="#c0c0c0" stroke-width="2.200" fill="none"/></svg>

<!-- infusion card -->
<div class="sunk" style="left:680px;top:498px;width:337px;height:160px"></div>
<div class="a ui" style="left:805px;top:500px;width:80px;text-align:center;font-size:14px;line-height:18px">输液注射卡</div>
<div class="a ul" style="left:718px;top:520px;width:260px"></div>
<div class="a ul" style="left:718px;top:524px;width:260px"></div>
<div class="a" style="left:963px;top:532px;width:16px;height:117px;background:#f0f0f0"></div>
<svg class="a" style="left:963px;top:532px" width="16" height="17" viewBox="0 0 16 17"><path d="M4.500 10.500L8 7L11.500 10.500" stroke="#c0c0c0" stroke-width="2.200" fill="none"/></svg>
<svg class="a" style="left:963px;top:632px" width="16" height="17" viewBox="0 0 16 17"><path d="M4.500 6.500L8 10L11.500 6.500" stroke="#c0c0c0" stroke-width="2.200" fill="none"/></svg>

<!-- hand + insert usage -->
<svg class="a" style="left:679px;top:666px" width="27" height="16" viewBox="0 0 27 16">
  <rect x="1" y="3" width="2.500" height="10.500" fill="#000"/>
  <rect x="3.500" y="4" width="2.500" height="8.500" fill="#00e0e8"/>
  <path d="M6.500 4.200 L12 4.200 L14 2.700 L24 2.700 L25.200 3.700 L24 5.600 L17.500 5.600 L19 6.800 L18.800 8.200 L17.500 8.700 L17.800 10 L16.500 11 L15.800 12.700 L8 12.700 L6.500 12Z" fill="#fff" stroke="#000" stroke-width="1.400" stroke-linejoin="round"/>
  <path d="M13 6.200 L17.500 5.700 M13.500 8.600 L17.500 8.600 M13.500 10.800 L16.500 10.800" stroke="#000" stroke-width="1.200" fill="none"/>
</svg>
<div class="a ui" style="left:707px;top:667px;color:#0000ff;letter-spacing:.2px">插入用法</div>
<div class="btn" style="left:816px;top:662px;width:105px;height:22px;line-height:20px">打印不干胶标签</div>
<div class="btn" style="left:924px;top:662px;width:92px;height:22px;line-height:20px">打印输液卡</div>

<div class="a" style="left:680px;top:688px;width:337px;height:24px;border:1px solid;border-color:#a0a0a0 #fff #fff #a0a0a0;box-shadow:inset 1px 1px 0 #696969,inset -1px -1px 0 #e3e3e3"></div>
<div class="a ui" style="left:686px;top:693px;color:#0000ff">静脉滴注</div>
<div class="a ui" style="left:746px;top:693px;color:#0000ff">静脉推注</div>
<div class="a ui" style="left:806px;top:693px;color:#0000ff">肌肉注射</div>
<div class="a ui" style="left:866px;top:693px;color:#0000ff">皮试</div>
<div class="a ui" style="left:902px;top:693px;color:#0000ff">入小壶</div>
<div class="a ui" style="left:950px;top:693px;color:#0000ff">雾化吸入</div>

</body>
</html>
